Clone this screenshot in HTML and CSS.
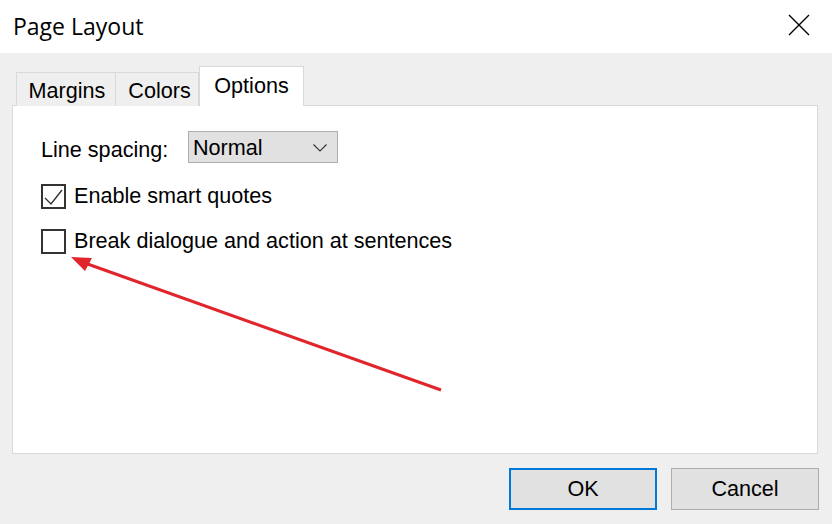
FILE: index.html
```html
<!DOCTYPE html>
<html>
<head>
<meta charset="utf-8">
<link rel="stylesheet" href="styles.css">
</head>
<body>
<div class="dialog">
  <div class="titlebar">
    <span class="title">Page Layout</span>
    <svg class="close" width="22" height="22" viewBox="0 0 22 22"><path d="M1 1 L21 21 M21 1 L1 21" stroke="#000" stroke-width="1.4" fill="none"/></svg>
  </div>
  <div class="content">
    <div class="tabs">
      <div class="tab">Margins</div>
      <div class="tab">Colors</div>
      <div class="tab active">Options</div>
    </div>
    <div class="panel">
      <div class="row">
        <span class="label">Line spacing:</span>
        <div class="select">
          <span>Normal</span>
          <svg width="14" height="8" viewBox="0 0 14 8"><path d="M0.5 0.5 L7 7 L13.5 0.5" stroke="#333" stroke-width="1.1" fill="none"/></svg>
        </div>
      </div>
      <div class="check-row first">
        <span class="box"><svg width="21" height="21" viewBox="0 0 21 21"><path d="M2 12 L8 18 L19 4" stroke="#333" stroke-width="1.4" fill="none"/></svg></span>
        <span class="check-label">Enable smart quotes</span>
      </div>
      <div class="check-row">
        <span class="box"></span>
        <span class="check-label">Break dialogue and action at sentences</span>
      </div>
    </div>
    <div class="buttons">
      <div class="btn default">OK</div>
      <div class="btn">Cancel</div>
    </div>
  </div>
  <svg class="arrow" width="832" height="524" viewBox="0 0 832 524">
    <line x1="441" y1="390" x2="82" y2="262" stroke="#e0252c" stroke-width="3"/>
    <polygon points="71,257 92,258 85,271" fill="#e0252c"/>
  </svg>
</div>
</body>
</html>
```
FILE: styles.css
```css
html, body { margin: 0; padding: 0; }
body { font-family: "Liberation Sans", Arial, sans-serif; color: #000; }
.dialog {
  position: relative;
  width: 832px;
  height: 524px;
  background: #efefef;
  display: flex;
  flex-direction: column;
  overflow: hidden;
}
.titlebar {
  height: 53px;
  background: #fff;
  display: flex;
  align-items: center;
  justify-content: space-between;
  padding: 0 22px 0 13px;
  box-sizing: border-box;
}
.title { font-family: "Open Sans", "Noto Sans", sans-serif; font-size: 23px; margin-top: -1px; }
.close { margin-top: -3px; }
.content { padding: 14px 14px 0 12px; display: flex; flex-direction: column; }
.tabs { display: flex; align-items: flex-end; margin-left: 4px; height: 39px; position: relative; z-index: 1; margin-bottom: -1px; }
.tab {
  height: 34px;
  box-sizing: border-box;
  border: 1px solid #d9d9d9;
  border-bottom: none;
  background: #efefef;
  font-size: 21.6px;
  display: flex;
  align-items: center;
  padding-top: 2px;
}
.tab + .tab { border-left: none; }
.tab:nth-child(1) { width: 100px; justify-content: center; padding-left: 2px; }
.tab:nth-child(2) { width: 83px; justify-content: center; padding-left: 5px; }
.tab.active {
  height: 40px;
  width: 105px;
  justify-content: center;
  background: #fff;
  border-left: 1px solid #d9d9d9;
  padding-top: 0;
  padding-bottom: 2px;
}
.panel {
  height: 349px;
  box-sizing: border-box;
  background: #fff;
  border: 1px solid #d9d9d9;
  padding: 25px 0 0 28px;
}
.row { display: flex; align-items: center; }
.label { font-size: 21.6px; width: 147px; padding-top: 6px; }
.select {
  width: 150px;
  height: 32px;
  box-sizing: border-box;
  background: #e1e1e1;
  border: 1px solid #adadad;
  display: flex;
  align-items: center;
  justify-content: space-between;
  padding: 0 10px 0 4px;
  font-size: 21.6px;
}
.select span { padding-top: 2px; }
.select svg { margin-top: 2px; }
.check-row { display: flex; align-items: center; margin-top: 19px; }
.check-row.first { margin-top: 20px; }
.box {
  width: 25px;
  height: 25px;
  box-sizing: border-box;
  border: 2px solid #333;
  background: #fff;
  display: flex;
  align-items: center;
  justify-content: center;
}
.check-label { font-size: 21.6px; margin-left: 8px; padding-top: 0; }
.buttons { display: flex; justify-content: flex-end; gap: 14px; margin-top: 14px; margin-right: -1px; }
.btn {
  width: 148px;
  height: 42px;
  box-sizing: border-box;
  background: #e1e1e1;
  border: 1px solid #adadad;
  display: flex;
  align-items: center;
  justify-content: center;
  font-size: 21.6px;
}
.btn.default { border: 2px solid #0078d7; }
.arrow { position: absolute; left: 0; top: 0; pointer-events: none; }
```
